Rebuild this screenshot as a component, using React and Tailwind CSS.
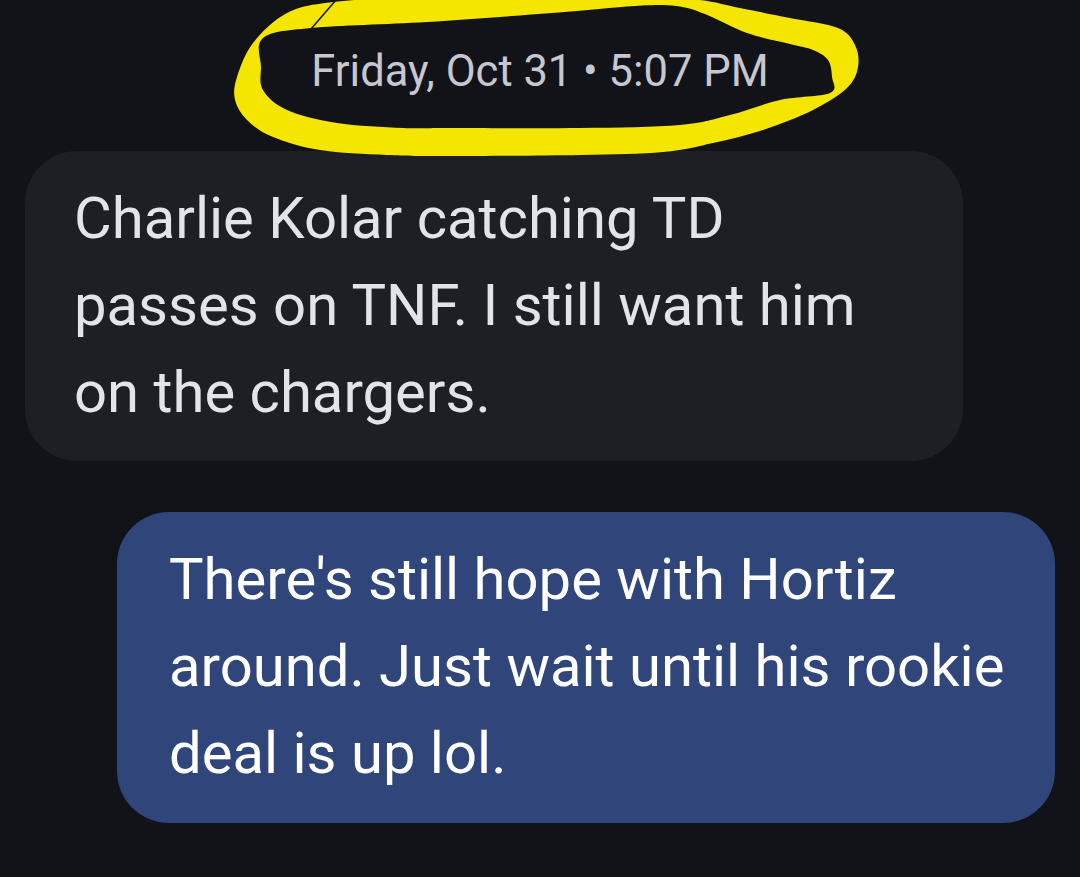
import React from "react";

const outer = [
  [287, 13], [333, 2], [420, -3], [540, -5], [640, -4], [700, 0], [740, 8], [790, 18],
  [838, 28], [855, 45], [858, 67], [847, 88], [813, 110], [763, 130], [713, 143],
  [663, 152], [580, 155], [450, 156], [387, 155], [320, 150], [273, 137], [247, 120],
  [235, 100], [237, 77], [253, 43],
];
const inner = [
  [263, 38], [311, 28], [427, 22], [552, 13], [635, 6], [676, 6], [705, 14], [747, 33],
  [790, 44], [813, 50], [828, 60], [832, 77], [830, 93], [780, 100], [730, 115],
  [680, 125], [580, 128], [450, 128], [403, 128], [337, 123], [287, 110], [263, 90],
  [261, 67],
];

function smooth(pts) {
  const n = pts.length;
  let d = `M${pts[0][0]},${pts[0][1]}`;
  for (let i = 0; i < n; i++) {
    const p0 = pts[(i - 1 + n) % n];
    const p1 = pts[i];
    const p2 = pts[(i + 1) % n];
    const p3 = pts[(i + 2) % n];
    const c1x = p1[0] + (p2[0] - p0[0]) / 6;
    const c1y = p1[1] + (p2[1] - p0[1]) / 6;
    const c2x = p2[0] - (p3[0] - p1[0]) / 6;
    const c2y = p2[1] - (p3[1] - p1[1]) / 6;
    d += ` C${c1x.toFixed(1)},${c1y.toFixed(1)} ${c2x.toFixed(1)},${c2y.toFixed(1)} ${p2[0]},${p2[1]}`;
  }
  return d + " Z";
}

function Scribble() {
  const d = smooth(outer) + " " + smooth(inner);
  return (
    <svg
      className="pointer-events-none absolute left-0 top-0"
      width="1080"
      height="170"
      viewBox="0 0 1080 170"
    >
      <path d={d} fill="#f4e600" fillRule="evenodd" />
      <line x1="336" y1="0" x2="311" y2="29" stroke="#1a1b16" strokeWidth="1.6" />
    </svg>
  );
}

export default function App() {
  return (
    <div
      className="relative flex h-[877px] w-[1080px] flex-col overflow-hidden bg-[#111318]"
      style={{ fontFamily: "Roboto, 'Noto Sans', sans-serif" }}
    >
      <div className="flex h-[151px] justify-center pt-[47px]">
        <span className="text-[43.5px] leading-[50px] text-[#c6c7d0]">
          Friday, Oct 31 • 5:07 PM
        </span>
      </div>
      <Scribble />
      <div className="ml-[25px] h-[310px] w-[938px] rounded-[52px] bg-[#1e1f24] pl-[49px] pt-[24px] text-[58px] leading-[87px] text-[#e3e3ea]">
        Charlie Kolar catching TD
        <br />
        passes on TNF. I still want him
        <br />
        on the chargers.
      </div>
      <div className="mt-[51px] ml-[117px] h-[311px] w-[938px] rounded-[52px] bg-[#30467a] pl-[52px] pt-[24px] text-[58px] leading-[87px] text-white">
        There's still hope with Hortiz
        <br />
        around. Just wait until his rookie
        <br />
        deal is up lol.
      </div>
    </div>
  );
}
